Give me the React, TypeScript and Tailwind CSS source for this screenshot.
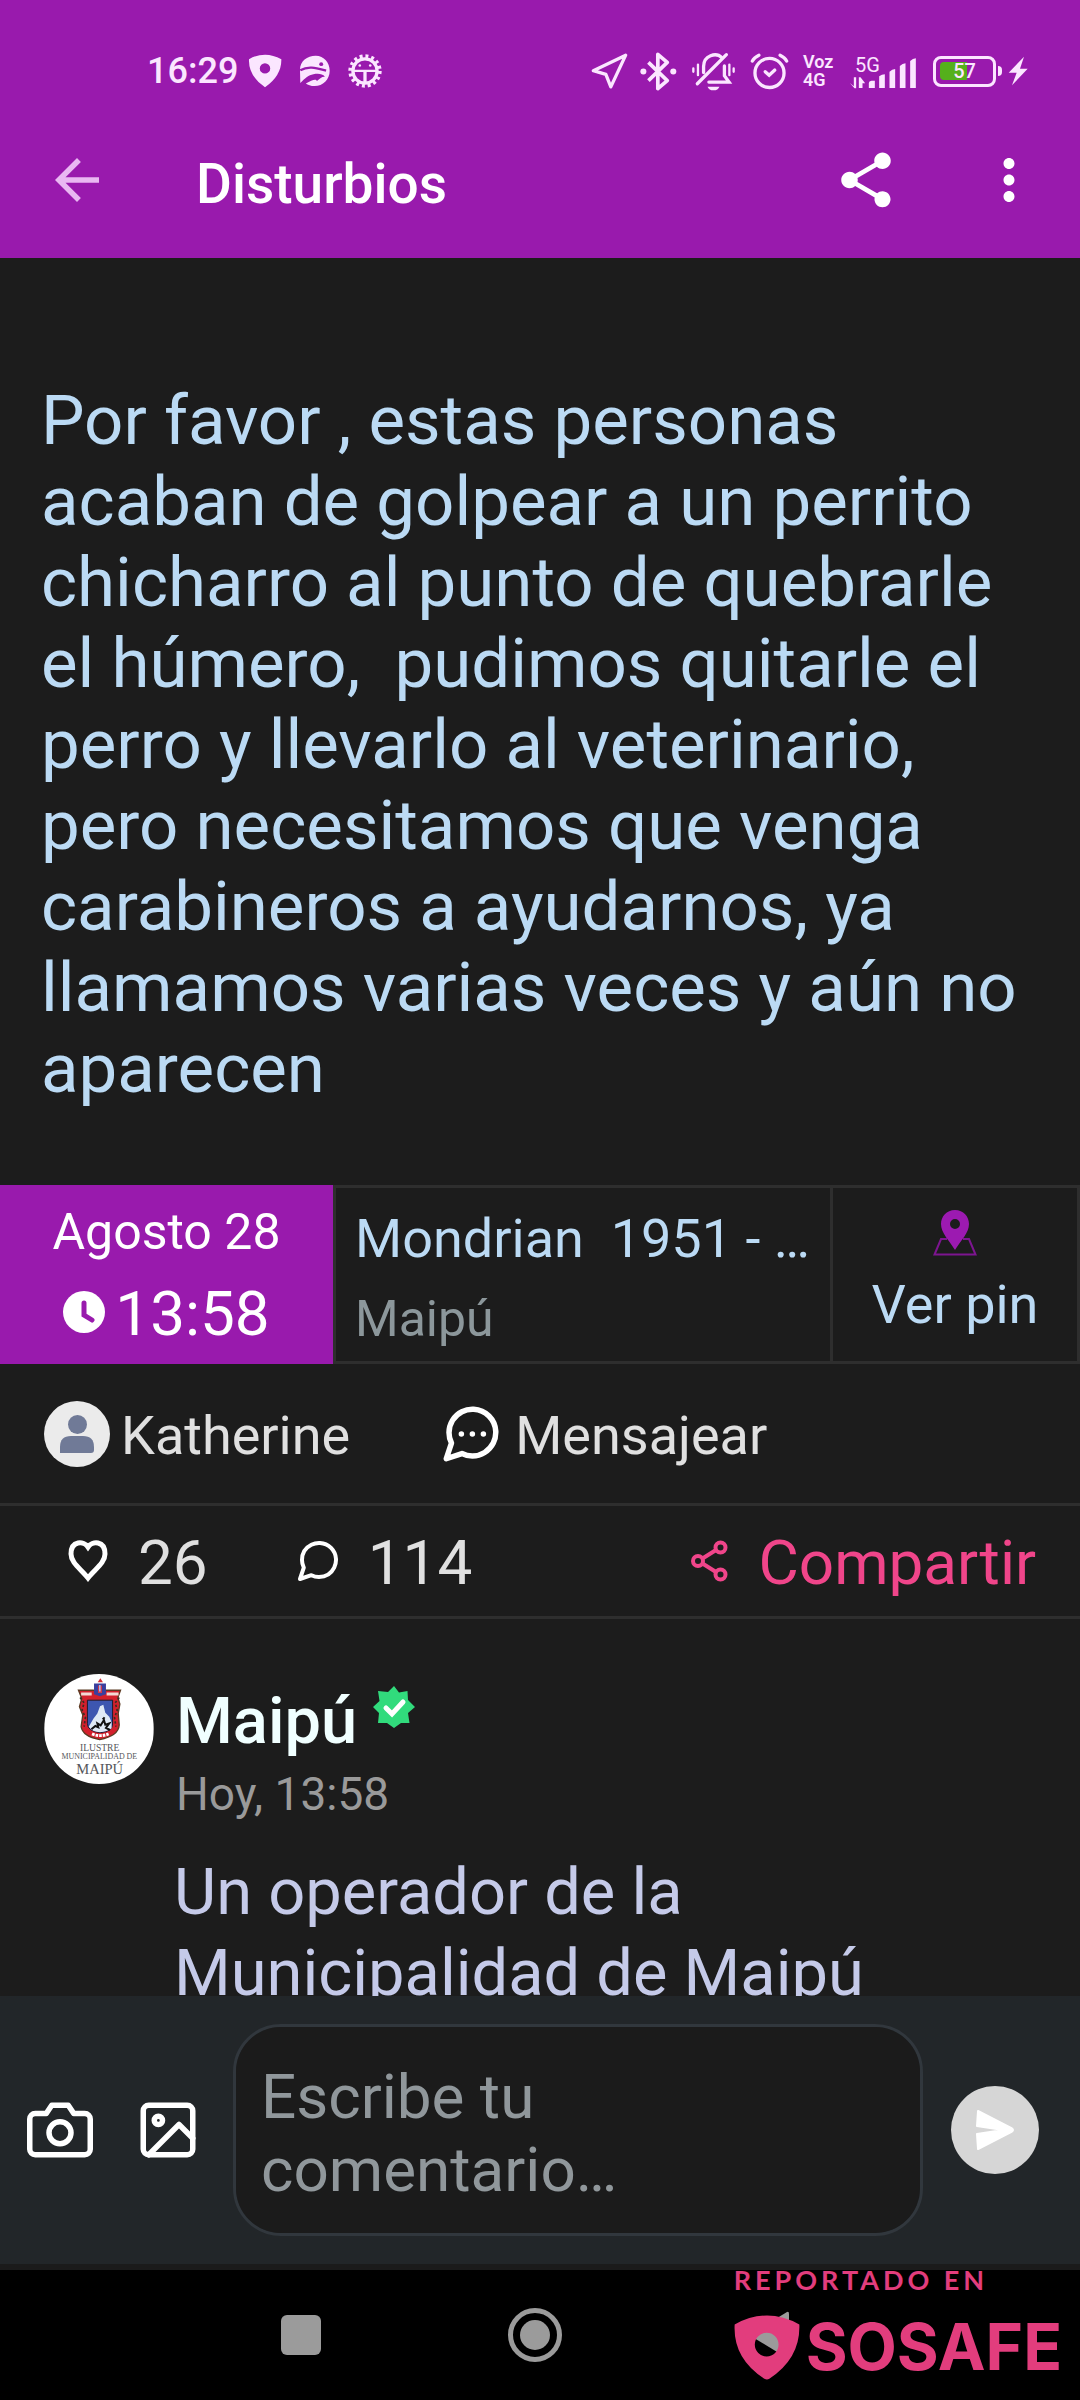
import type { ReactNode } from "react";
import { MdArrowBack, MdMoreVert, MdShare } from "react-icons/md";
import { FiCamera, FiImage, FiMessageCircle } from "react-icons/fi";

type DrawingProps = { box: string; className: string; children: ReactNode };

function Drawing({ box, className, children }: DrawingProps) {
  return (
    <svg viewBox={box} className={`block shrink-0 ${className}`} fill="currentColor" aria-hidden="true">
      {children}
    </svg>
  );
}

function StatusBar() {
  return (
    <div className="flex h-[98px] items-center pt-11 text-[#fbe6ff]">
      <span className="ml-[147px] text-4xl font-medium leading-10">16:29</span>
      <Drawing box="384 68 102 104" className="ml-2.5 h-[34px] w-[34px]">
        <path
          fillRule="evenodd"
          d="M386 84 Q435 56 485 84 Q486 135 435 170 Q384 135 386 84ZM435 96a16 16 0 1 0 0 32a16 16 0 1 0 0-32Z"
        />
      </Drawing>
      <Drawing box="537 72 98 98" className="ml-[17px] h-8 w-8">
        <path d="M540 118C540 90 562 74 588 74C614 74 631 96 631 120C631 147 610 167 585 167C573 167 564 163 558 159C576 151 588 143 592 152C603 144 606 138 617 139C608 128 594 129 581 131C566 134 557 142 541 158Z" />
        <path d="M541 119C566 104 590 112 620 120" fill="none" stroke="#991aad" strokeWidth="7" />
        <circle cx="605" cy="100" r="6" fill="#991aad" />
      </Drawing>
      <Drawing box="683 68 104 104" className="ml-[17px] h-[34px] w-[34px]">
        <circle cx="735" cy="120" r="37" fill="none" stroke="currentColor" strokeWidth="10" />
        <circle cx="735" cy="120" r="45" fill="none" stroke="currentColor" strokeWidth="12" strokeDasharray="9 8.67" />
        <path d="M699 116h72v7h-31v34h-10v-34h-31z" />
        <circle cx="719" cy="103" r="4" />
        <circle cx="751" cy="103" r="4" />
      </Drawing>

      <div className="ml-auto mr-[52px] flex items-center">
        <Drawing box="64 66 112 114" className="h-[38px] w-[37px]">
          <path
            d="M169 75L71 122L109 133L124 171Z"
            fill="none"
            stroke="currentColor"
            strokeWidth="10"
            strokeLinejoin="round"
          />
        </Drawing>
        <Drawing box="212 62 110 116" className="ml-3 h-[39px] w-[37px]">
          <path
            d="M237 93L293 147L265 171V69L293 93L237 147"
            fill="none"
            stroke="currentColor"
            strokeWidth="11"
            strokeLinejoin="round"
          />
          <circle cx="222" cy="120" r="9" />
          <circle cx="311" cy="120" r="9" />
        </Drawing>
        <Drawing box="364 62 136 118" className="ml-3.5 h-[39px] w-[45px]">
          <g fill="none" stroke="currentColor" strokeWidth="10" strokeLinecap="round">
            <path d="M471 70L383 158" />
            <path d="M402 124V106C402 72 440 62 457 79" />
            <path d="M465 104V134L479 153H418" />
            <path d="M371 112v10M385 100v32M480 100v32M493 112v10" strokeWidth="7" />
          </g>
          <path d="M414 167h36q-4 11-18 11t-18-11Z" />
        </Drawing>
        <Drawing box="542 62 118 114" className="ml-3.5 h-[38px] w-[39px]">
          <g fill="none" stroke="currentColor" strokeWidth="10" strokeLinecap="round">
            <circle cx="601" cy="125" r="44" />
            <path d="M549 89Q554 78 569 71M653 89Q648 78 633 71" />
            <path d="M588 121L600 132L617 116" />
          </g>
        </Drawing>
        <div className="ml-3.5 flex w-[34px] flex-col text-lg font-semibold leading-[18px]">
          <span>Voz</span>
          <span>4G</span>
        </div>
        <div className="ml-3 flex h-9 w-[68px] items-end">
          <div className="flex flex-col">
            <span className="ml-1.5 w-0 text-xl leading-6">5G</span>
            <Drawing box="844 132 50 36" className="h-3 w-[17px]">
              <path d="M846 150l12 10v-27h7v33h-5zM873 133h5l14 18h-8v14h-11z" />
            </Drawing>
          </div>
          <Drawing box="900 74 146 96" className="ml-0.5 h-8 w-[49px]">
            <path d="M902 152Q902 146 910 145h10v22h-18zM933 132q8-6 17-6v41h-17zM964 118q8-7 17-8v57h-17zM995 101q8-7 17-8v74h-17zM1026 86q8-8 17-8v89h-17z" />
          </Drawing>
        </div>
        <div className="relative ml-4 flex h-[31px] w-[63px] items-center rounded-lg border-[3px] border-current p-1">
          <div className="h-[18px] w-[27px] rounded-l bg-[#55b01c]" />
          <span className="absolute inset-0 text-center text-xl font-medium leading-[25px]">57</span>
        </div>
        <div className="ml-0.5 h-2.5 w-1 rounded-r bg-current" />
        <Drawing box="1312 76 60 90" className="ml-1.5 h-[30px] w-5">
          <path d="M1360 78L1314 126H1338L1324 164L1371 114H1348Z" />
        </Drawing>
      </div>
    </div>
  );
}

function TopBar() {
  return (
    <div className="flex h-40 items-center pl-11 pr-[38px] pt-1 text-white">
      <button type="button" aria-label="Volver">
        <MdArrowBack className="size-[66px] text-[#e9b8f2]" />
      </button>
      <h1 className="ml-[86px] pt-2 text-[55px] font-medium leading-[62px]">Disturbios</h1>
      <button type="button" aria-label="Compartir" className="ml-auto">
        <MdShare className="size-[66px]" />
      </button>
      <button type="button" aria-label="Más opciones" className="ml-[77px]">
        <MdMoreVert className="size-[66px]" />
      </button>
    </div>
  );
}

function InfoRow() {
  return (
    <section className="flex h-[179px]">
      <div className="flex w-[333px] shrink-0 flex-col items-center bg-[#991aad] pt-[19px] text-white">
        <span className="text-[50px] leading-[56px]">Agosto 28</span>
        <span className="mt-[18px] flex items-center gap-2.5 text-[62px] leading-[72px]">
          <Drawing box="0 0 42 42" className="mb-1 size-[42px]">
            <circle cx="21" cy="21" r="21" />
            <path d="M21 12v12l8 5" fill="none" stroke="#991aad" strokeWidth="5" strokeLinecap="round" />
          </Drawing>
          13:58
        </span>
      </div>
      <div className="flex min-w-0 flex-1 flex-col border-[3px] border-[#2e2e2e] pl-[19px] pr-5 pt-[19px]">
        <span className="truncate whitespace-pre text-[54px] leading-[64px] text-[#bbdaf4]">
          {"Mondrian  1951 - Maipú"}
        </span>
        <span className="mt-[18px] text-[50px] leading-[60px] text-[#8c979b]">Maipú</span>
      </div>
      <button
        type="button"
        className="flex w-[247px] shrink-0 flex-col items-center border-y-[3px] border-r-[3px] border-[#2e2e2e] pt-[22px] text-[#bbdaf4]"
      >
        <Drawing box="0 0 44 46" className="h-[46px] w-11">
          <path d="M14 29H8L1.5 44.500H42.500L36 29H30" fill="none" stroke="#7d1590" strokeWidth="2" />
          <path
            fill="#9c1ab1"
            fillRule="evenodd"
            d="M22 0C13.500 0 8 6.500 8 14C8 23 16 30 22 40C28 30 36 23 36 14C36 6.500 30.500 0 22 0ZM22 9a5 5 0 1 1 0 10a5 5 0 0 1 0-10Z"
          />
        </Drawing>
        <span className="mt-[17px] text-[54px] leading-[64px]">Ver pin</span>
      </button>
    </section>
  );
}

function AuthorRow() {
  return (
    <section className="flex h-[139px] items-center pl-11 text-[54px] leading-[64px] text-[#e0e0e0]">
      <a href="#katherine" className="flex items-center gap-[11px]">
        <Drawing box="0 0 66 66" className="size-[66px]">
          <circle cx="33" cy="33" r="33" fill="#ebebeb" />
          <circle cx="33.500" cy="23.500" r="9.500" fill="#707a97" />
          <path d="M16 52V46Q16 35 27 35H39Q50 35 50 46V49Q50 52 47 52Z" fill="#707a97" />
        </Drawing>
        <span className="pt-1">Katherine</span>
      </a>
      <button type="button" className="ml-[88px] flex items-center gap-[11px]">
        <Drawing box="0 0 24 24" className="size-[66px] text-white">
          <path
            d="M21 11.500a8.380 8.380 0 0 1-.9 3.800 8.500 8.500 0 0 1-7.600 4.700 8.380 8.380 0 0 1-3.800-.9L3 21l1.900-5.700a8.380 8.380 0 0 1-.9-3.800 8.500 8.500 0 0 1 4.700-7.600 8.380 8.380 0 0 1 3.800-.9h.5a8.480 8.480 0 0 1 8 8v.5z"
            fill="none"
            stroke="currentColor"
            strokeWidth="2"
            strokeLinejoin="round"
          />
          <circle cx="8.500" cy="12" r="1" />
          <circle cx="12.500" cy="12" r="1" />
          <circle cx="16.500" cy="12" r="1" />
        </Drawing>
        <span className="pt-1">Mensajear</span>
      </button>
    </section>
  );
}

function StatsRow() {
  return (
    <section className="flex h-[116px] items-center border-y-[3px] border-[#2e2e2e] pl-[68px] pr-11 text-[62px] leading-[72px] text-[#e0e0e0]">
      <button type="button" aria-label="Me gusta" className="flex items-center">
        <Drawing box="0 0 40 42" className="h-[42px] w-10 text-white">
          <path
            d="M20 7C16 1 3 0 3 14C3 23 13 29 20 38C27 29 37 23 37 14C37 0 24 1 20 7Z"
            fill="none"
            stroke="currentColor"
            strokeWidth="5"
          />
        </Drawing>
        <span className="ml-[30px] pt-1">26</span>
      </button>
      <button type="button" aria-label="Comentarios" className="ml-[86px] flex items-center">
        <FiMessageCircle className="size-12 text-white" />
        <span className="ml-[26px] pt-1">114</span>
      </button>
      <button type="button" className="ml-auto flex items-center text-[#f0458a]">
        <Drawing box="0 0 37 42" className="h-[42px] w-[37px]">
          <g fill="none" stroke="currentColor" strokeWidth="4">
            <circle cx="29.500" cy="7.500" r="5" />
            <circle cx="7" cy="21" r="5" />
            <circle cx="29.500" cy="34.500" r="5" />
            <path d="M11.500 18.500L25 10M11.500 23.500L25 32" />
          </g>
        </Drawing>
        <span className="ml-[30px] pt-1">Compartir</span>
      </button>
    </section>
  );
}

function MunicipalCrest() {
  return (
    <Drawing box="42 41 330 332" className="size-[110px] rounded-full">
      <rect x="42" y="41" width="330" height="332" fill="#fff" />
      <path d="M203 66l8-12 8 12z" fill="#d32f36" />
      <path
        d="M145 90H190L208 100L226 90H272L264 112L270 132L265 160L268 195Q266 228 209 239Q158 230 153 200L158 165L148 140L155 115Z"
        fill="#d3202c"
        stroke="#5b3a22"
        strokeWidth="4"
      />
      <path d="M150 112L162 128L156 150L166 172L162 200M268 112L256 128L262 150L254 172L258 200" fill="none" stroke="#3d2b22" strokeWidth="5" strokeDasharray="7 6" />
      <path d="M192 70H228V102L210 108L192 102Z" fill="#3a3f9e" />
      <path d="M204 76h12v22h-12z" fill="#d3394a" />
      <path d="M207 74h5v20h-5z" fill="#a9b6ef" />
      <path d="M153 97h32v9h-32zM230 97h36v9h-36z" fill="#f3d9d4" />
      <path d="M172 120H248V192Q248 215 210 218Q172 214 172 190Z" fill="#3d56b0" stroke="#1c1c2c" strokeWidth="3" />
      <path d="M176 200L190 176L202 160L210 138L220 134L226 158L238 170L245 186V205Q232 216 210 217Q186 215 176 200Z" fill="#dfe9f5" />
      <path
        d="M184 208L196 198L205 202L202 190L212 196L222 180L226 194L238 190L228 204L240 210M218 178l6-6"
        fill="none"
        stroke="#111"
        strokeWidth="6"
      />
      <path d="M186 222Q210 232 236 222" fill="none" stroke="#fff" strokeWidth="9" strokeDasharray="8 3" />
      <g fill="#55565a" fontFamily="Liberation Serif, serif" textAnchor="middle">
        <text x="209" y="272" fontSize="29">ILUSTRE</text>
        <text x="208" y="299" fontSize="24">MUNICIPALIDAD DE</text>
        <text x="209" y="342" fontSize="44">MAIPÚ</text>
      </g>
    </Drawing>
  );
}

function Comment() {
  return (
    <article className="flex items-start pl-11 pr-11 pt-[55px]">
      <MunicipalCrest />
      <div className="ml-5 min-w-0 flex-1 pt-[9px]">
        <div className="flex items-start">
          <h2 className="ml-0.5 text-[65px] font-medium leading-[76px] text-[#f0ffff]">Maipú</h2>
          <Drawing box="0 0 42 42" className="ml-4 mt-[3px] size-[42px]">
            <path
              fill="#31db7c"
              d="M21 0L26 6.500L34.500 5L35 14L42 21L35 27L36.500 37H28L21 42L14 37H5L6 27L0 21L6.500 15L5 5L15 6Z"
            />
            <path d="M13 22l6 6 11-12" fill="none" stroke="#fff" strokeWidth="5" strokeLinecap="round" />
          </Drawing>
        </div>
        <time className="mt-[7px] block pl-0.5 text-[46px] leading-[56px] text-[#9a9a9a]">Hoy, 13:58</time>
        <p className="mt-[30px] text-[65px] leading-[81px] text-[#c5cae9]">Un operador de la Municipalidad de Maipú</p>
      </div>
    </article>
  );
}

function Composer() {
  return (
    <form className="flex shrink-0 items-center border-b-[6px] border-[#1b1b1b] bg-[#222629] py-7 pl-[27px] pr-[41px]">
      <button type="button" aria-label="Tomar foto" className="text-white">
        <FiCamera className="size-[66px]" />
      </button>
      <button type="button" aria-label="Adjuntar imagen" className="ml-[42px] text-white">
        <FiImage className="size-[66px]" />
      </button>
      <textarea
        aria-label="Comentario"
        rows={2}
        placeholder="Escribe tu comentario…"
        className="ml-8 h-[212px] min-w-0 flex-1 resize-none rounded-[48px] border-[3px] border-[#31373d] bg-[#1b1b1b] py-[33px] pl-[25px] pr-10 text-[62px] leading-[73px] text-white placeholder:text-[#90979b]"
      />
      <button type="submit" aria-label="Enviar" className="ml-7 flex size-[88px] items-center justify-center rounded-full bg-[#d6d6d6] text-white">
        <Drawing box="0 0 42 42" className="size-[42px]">
          <path
            d="M4 2L38 19.500Q40 21 38 22.500L4 40L3 25L26 21.500V20.500L3 17Z"
            stroke="currentColor"
            strokeWidth="2"
            strokeLinejoin="round"
          />
        </Drawing>
      </button>
    </form>
  );
}

function SystemNav() {
  return (
    <nav className="relative flex h-[130px] shrink-0 items-center justify-center gap-[174px] bg-black pr-2.5 text-[#9b9b9b]">
      <button type="button" aria-label="Recientes" className="flex size-[60px] items-center justify-center">
        <span className="size-10 rounded-md bg-current" />
      </button>
      <button type="button" aria-label="Inicio" className="flex size-[60px] items-center justify-center">
        <span className="flex size-[54px] items-center justify-center rounded-full border-[5px] border-current">
          <span className="size-[30px] rounded-full bg-current" />
        </span>
      </button>
      <button type="button" aria-label="Atrás" className="flex size-[60px] items-center justify-center">
        <Drawing box="0 0 42 48" className="h-12 w-[42px]">
          <path d="M1 24L39 1Q41 0 41 3V45Q41 48 39 47Z" />
        </Drawing>
      </button>
      <div className="absolute right-[18px] top-0 text-[#e23d7d]">
        <p className="font-[Lato] text-[27px] font-bold leading-5 tracking-[4px]">REPORTADO EN</p>
        <div className="mt-[22px] flex items-center gap-1.5 font-[Inter] text-[64px] font-bold leading-[70px]">
          <Drawing box="48 194 200 196" className="h-[65px] w-[66px]">
            <path
              fillRule="evenodd"
              d="M50 222Q148 168 246 222Q250 325 155 387Q148 391 140 387Q44 325 50 222ZM147 247a36 36 0 1 0 0 72a36 36 0 1 0 0-72Z"
            />
          </Drawing>
          SOSAFE
        </div>
      </div>
    </nav>
  );
}

export default function App() {
  return (
    <div className="flex h-screen flex-col overflow-hidden bg-[#1c1c1c] font-[Roboto]">
      <header className="shrink-0 bg-[#991aad]">
        <StatusBar />
        <TopBar />
      </header>
      <main className="min-h-0 flex-1 overflow-hidden">
        <p className="whitespace-pre-wrap pb-[76px] pl-[41px] pr-[41px] pt-[122px] text-[69px] leading-[81px] text-[#bbdaf4]">
          {
            "Por favor , estas personas acaban de golpear a un perrito chicharro al punto de quebrarle el húmero,  pudimos quitarle el perro y llevarlo al veterinario, pero necesitamos que venga carabineros a ayudarnos, ya llamamos varias veces y aún no aparecen"
          }
        </p>
        <InfoRow />
        <AuthorRow />
        <StatsRow />
        <Comment />
      </main>
      <Composer />
      <SystemNav />
    </div>
  );
}
